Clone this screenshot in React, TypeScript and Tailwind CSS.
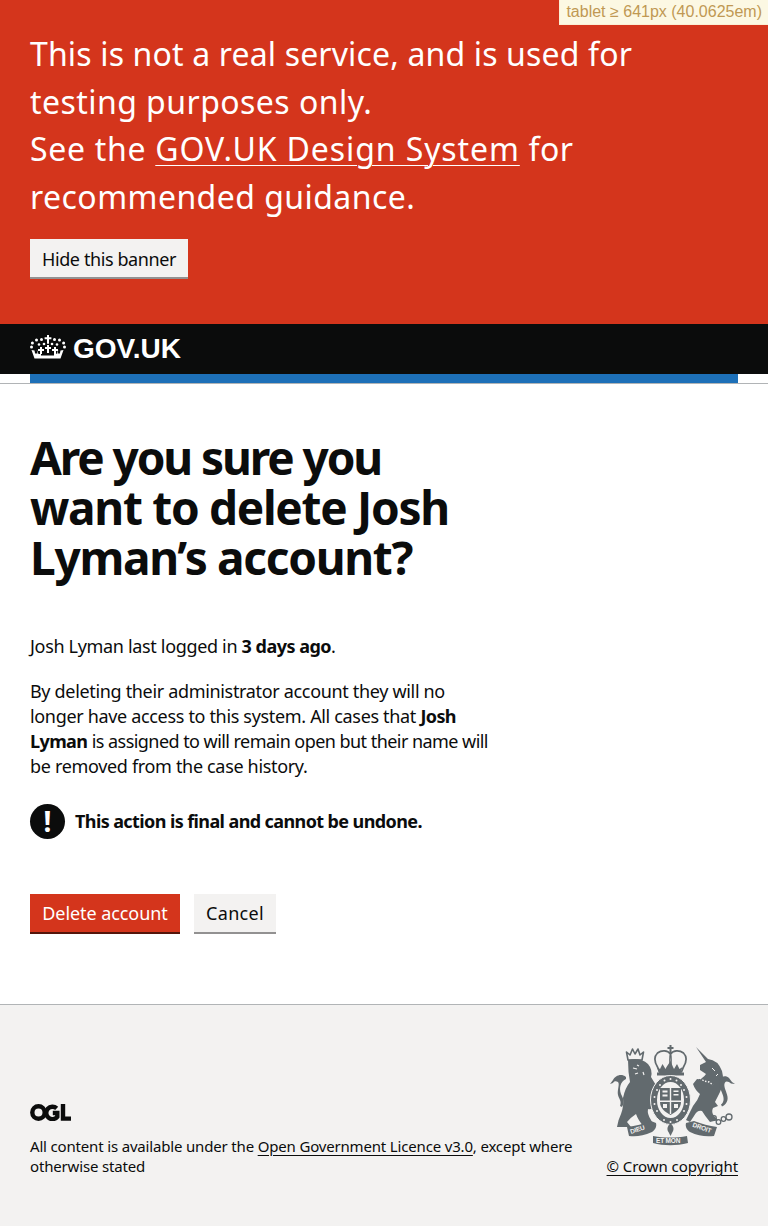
import React from 'react';

const bodyFont = "font-['Noto_Sans',sans-serif]";

const Crown = () => (
  <svg width="36" height="26" viewBox="0 0 36 26" fill="#fff" aria-hidden="true">
    {/* cross */}
    <path d="M17 0h2v2.200h2.400v2H19v4.600h-2V4.200h-2.400v-2H17z" />
    {/* jewels */}
    <circle cx="11.500" cy="4.500" r="1.500" />
    <circle cx="24.500" cy="4.500" r="1.500" />
    <circle cx="6.500" cy="5" r="1.500" />
    <circle cx="29.500" cy="5" r="1.500" />
    <circle cx="2.400" cy="8" r="1.500" />
    <circle cx="33.600" cy="8" r="1.500" />
    <circle cx="1.500" cy="12" r="1.500" />
    <circle cx="34.500" cy="12" r="1.500" />
    <circle cx="14" cy="9" r="1.300" />
    <circle cx="22" cy="9" r="1.300" />
    <circle cx="9" cy="9.500" r="1.300" />
    <circle cx="27" cy="9.500" r="1.300" />
    {/* small crosses */}
    <path d="M17 10h2v2h2v2h-2v4h-2v-4h-2v-2h2z" />
    <path d="M10 12h2v2h2v2h-2v3h-2v-3H8v-2h2z" />
    <path d="M24 12h2v2h2v2h-2v3h-2v-3h-2v-2h2z" />
    <path d="M1.500 15l3 .4.6 3h2.400l-.8-4 1.800 4.500h2.500v1.600h13v-1.600h2.500l1.800-4.500-.8 4h2.400l.6-3 3-.4-3 8.600H4.500z" />
  </svg>
);

const OglLogo = () => (
  <svg width="41" height="17" viewBox="0 0 41 17" fill="none" stroke="#0b0c0c" strokeWidth="4.400" aria-hidden="true">
    <circle cx="8.500" cy="8.500" r="6.200" />
    <path d="M26.700 4.400a6.200 6.200 0 1 0 .6 8.400V9h-4.500" />
    <path d="M33 0v14.600H41" />
  </svg>
);

const Crest = () => (
  <svg width="125" height="102" viewBox="0 0 125 102" fill="#626a6e" className="mr-[3px]" aria-hidden="true">
    {/* lion crown */}
    <path d="M18 16l-1.500-8 3.500 3 2.500-6 2.500 5 3-5 2 6 3.500-3-1.500 8z" fill="none" stroke="#626a6e" strokeWidth="1.600" strokeLinejoin="round" />
    {/* lion */}
    <path d="M18 16Q30 13 38 20Q43 26 41 33Q46 40 48 47L45 50Q46 56 44 62Q42 66 38 65Q37 70 41 76L44 83L34 83Q28 76 26 70Q20 74 17 78L21 83L7 83Q8 76 11 70Q14 62 13 54Q15 44 20 38Q18 28 18 16Z" />
    <path d="M16 33c-5-4-11-1-13 3L0 40l3-1c1-2 3-2 5-1 2 2-1 8 0 13 1 4 4 6 2 11l2 1c3-5 1-9-1-13-2-6-1-12 5-15z" />
    <path d="M23 24l4 1M25 30l3-1M33 28l1 3M27 21l2 1" stroke="#f3f2f1" strokeWidth="1.200" fill="none" />
    {/* royal crown */}
    <path d="M60.500 1v8M57.500 4h6" stroke="#626a6e" strokeWidth="2" fill="none" />
    <path d="M60.500 10c-3-4-9-4-13-1-4 4-3 9 0 14l2 5h22l2-5c3-5 4-10 0-14-4-3-10-3-13 1z" fill="none" stroke="#626a6e" strokeWidth="1.700" />
    <path d="M60.500 9c-1.500 5-1 10 0 19M60.500 9c1.500 5 1 10 0 19" fill="none" stroke="#626a6e" strokeWidth="1.200" />
    <path d="M60.500 17l2.500 6 1 2 3-5 2.500 5 3-2-2 6H49l-2-6 3 2 2.500-5 3 5 1-2z" />
    <path d="M47 28.500h27v3H47z" />
    {/* shield and garter */}
    <ellipse cx="60.500" cy="56" rx="20" ry="24.500" stroke="#f3f2f1" strokeWidth="1" />
    <ellipse cx="60.500" cy="56" rx="13.500" ry="18" fill="#f3f2f1" />
    <path d="M50 44h21v14c0 6-5 10-10.500 13C55 68 50 64 50 58z" />
    <path d="M59.800 44h1.400v26h-1.400zM50 56.500h21v1.400H50z" fill="#f3f2f1" />
    <path d="M52.500 46.500h5v2h-5zM52.500 50.500h5v2h-5zM63.500 46.500h5v1.500h-5zM63.500 50h5v1.500h-5zM64 60h4v4h-4zM53 60h4v4h-4z" fill="#f3f2f1" />
    <g fill="#f3f2f1">
      <circle cx="47" cy="46" r="1" /><circle cx="50" cy="41" r="1" /><circle cx="54.500" cy="36.500" r="1" /><circle cx="60.500" cy="35" r="1" />
      <circle cx="66.500" cy="36.500" r="1" /><circle cx="71" cy="41" r="1" /><circle cx="74" cy="46" r="1" /><circle cx="76.500" cy="53" r="1" />
      <circle cx="44.500" cy="53" r="1" /><circle cx="44.500" cy="60" r="1" /><circle cx="76.500" cy="60" r="1" />
      <circle cx="47" cy="67" r="1" /><circle cx="74" cy="67" r="1" /><circle cx="54" cy="76" r="1" /><circle cx="67" cy="76" r="1" /><circle cx="60.500" cy="78" r="1" />
    </g>
    {/* unicorn */}
    <path d="M86 3L98 15Q108 16 112 27Q115 38 110 48Q107 54 105 58L108 62L103 64Q101 68 104 72L108 76L100 78Q95 72 92 67Q87 66 84 72L80 78L76 76Q79 70 83 62Q88 56 90 50Q85 46 83 40L87 35Q92 36 96 30L90 26L90 21L96 18Z" strokeLinejoin="round" />
    <path d="M110 36c1-4 6-5 9-2l3 4 3 2-4-.5c-2-2-5-3-6-1-2 3 1 8 2 12 2 6-1 10-5 12l-1-2c3-2 3-6 2-9-2-6-5-11-3-16z" />
    <path d="M90 34l4 3 5 1 4 3" fill="none" stroke="#f3f2f1" strokeWidth="1.400" strokeDasharray="1.500 1.500" />
    <path d="M102 24l3 3M106 32l2-2" stroke="#f3f2f1" strokeWidth="1" fill="none" />
    <g fill="none" stroke="#626a6e" strokeWidth="1.300">
      <circle cx="104" cy="74" r="2.300" /><circle cx="108.500" cy="78" r="2.300" /><circle cx="113.500" cy="75" r="2.300" /><circle cx="119" cy="73" r="3" />
    </g>
    {/* motto ribbons */}
    <path d="M17 83c9-1 16-3 24-6l5 2c1 4-1 7-4 9-9 4-16 5-23 4z" />
    <path d="M107 83c-8-1-15-3-23-6l-8 2c-1 4 1 7 4 9 8 4 16 5 24 4z" />
    <path d="M43 92c12 2 23 2 34 0l1 7c-12 3-24 3-35 0z" />
    <path d="M60.500 79c3 3 4 6 2 9l-2 4-2-4c-2-3-1-6 2-9z" />
    <g fill="#f3f2f1" fontFamily="'Liberation Sans', sans-serif" fontSize="6.500" fontWeight="700">
      <text x="21" y="90" transform="rotate(-18 21 90)">DIEU</text>
      <text x="82" y="82.500" transform="rotate(20 82 82.500)">DROIT</text>
      <text x="46" y="98.500">ET MON</text>
    </g>
  </svg>
);

export default function App() {
  return (
    <div className={`${bodyFont} relative min-h-[1226px] bg-white text-[#0b0c0c]`}>
      {/* Breakpoint label */}
      <div className="absolute right-0 top-0 z-10 border-b border-l border-[#fbeed5] bg-[#fcf8e3] px-[6px] py-[3px] font-['Liberation_Sans',sans-serif] text-[16px] leading-[18px] text-[#c09853]">
        tablet ≥ 641px (40.0625em)
      </div>

      {/* Warning banner */}
      <div className="h-[324px] bg-[#d4351c] px-[30px] pt-[30px] text-white">
        <p className="w-[620px] text-[32px] leading-[47.500px] tracking-[0.45px]">
          <span className="tracking-[0.15px]">This is not a real service, and is used for</span> testing purposes only.
          <br />
          <span className="tracking-[0.7px]">See the </span>
          <a className="tracking-[0.9px] underline decoration-1 underline-offset-[4px]" href="#">GOV.UK Design System</a> for recommended guidance.
        </p>
        <button className="mt-[19px] h-[40px] border-b-2 border-[#929191] bg-[#f3f2f1] px-[12px] pt-[2px] text-[18px] leading-[25px] tracking-[-0.4px] text-[#0b0c0c]">
          Hide this banner
        </button>
      </div>

      {/* Header */}
      <header className="border-b border-[#b1b4b6]">
        <div className="flex h-[50px] items-center gap-[7px] bg-[#0b0c0c] px-[30px]">
          <span className="mb-[2px] block h-[26px]"><Crown /></span>
          <span className="font-['Liberation_Sans',sans-serif] text-[28px] leading-[30px] font-bold text-white">GOV.UK</span>
        </div>
        <div className="mx-[30px] h-[9px] bg-[#1d70b8]" />
      </header>

      {/* Main */}
      <main className="px-[30px] pt-[48px]">
        <h1 className="w-[472px] text-[46px] leading-[50px] font-bold tracking-[-1.3px]">
          <span className="tracking-[-2.100px]">Are you sure you</span> want to delete Josh Lyman’s account?
        </h1>
        <div className="mt-[52px] w-[480px] text-[18px] leading-[25px] tracking-[-0.33px]">
          <p>
            Josh Lyman last logged in <strong className="tracking-[-0.5px]">3 days ago</strong>.
          </p>
          <p className="mt-[20px]">
            By deleting their administrator account they will no
            <br />
            longer have access to this system. All cases that <strong className="tracking-[-0.6px]">Josh Lyman</strong> <span className="tracking-[-0.55px]">is assigned to will remain open but their name will</span> be removed from the case history.
          </p>
        </div>
        <div className="mt-[25px] flex h-[35px] items-center gap-[10px]">
          <span className="flex h-[35px] w-[35px] items-center justify-center rounded-full bg-[#0b0c0c] text-[28px] leading-[35px] font-bold text-white">!</span>
          <strong className="text-[18px] leading-[25px] tracking-[-0.6px]">This action is final and cannot be undone.</strong>
        </div>
        <div className="mt-[55px] flex gap-[14px]">
          <button className="h-[40px] w-[150px] border-b-2 border-[#55150b] bg-[#d4351c] text-[18px] leading-[25px] tracking-[-0.07px] text-white">
            Delete account
          </button>
          <button className="h-[40px] w-[82px] border-b-2 border-[#929191] bg-[#f3f2f1] text-[18px] leading-[25px] tracking-[0.3px] text-[#0b0c0c]">
            Cancel
          </button>
        </div>
      </main>

      {/* Footer */}
      <footer className="mt-[70px] h-[222px] border-t border-[#b1b4b6] bg-[#f3f2f1] px-[30px] pt-[39px]">
        <div className="flex items-end justify-between text-[15px] leading-[20px] tracking-[-0.17px]">
          <div className="w-[560px]">
            <OglLogo />
            <p className="mt-[15px]">
              All content is available under the <a className="underline decoration-1 underline-offset-[3px]" href="#">Open Government Licence v3.0</a>, except where otherwise stated
            </p>
          </div>
          <div className="flex flex-col items-end">
            <Crest />
            <a className="mt-[10px] tracking-[-0.05px] underline decoration-1 underline-offset-[3px]" href="#">© Crown copyright</a>
          </div>
        </div>
      </footer>
    </div>
  );
}
